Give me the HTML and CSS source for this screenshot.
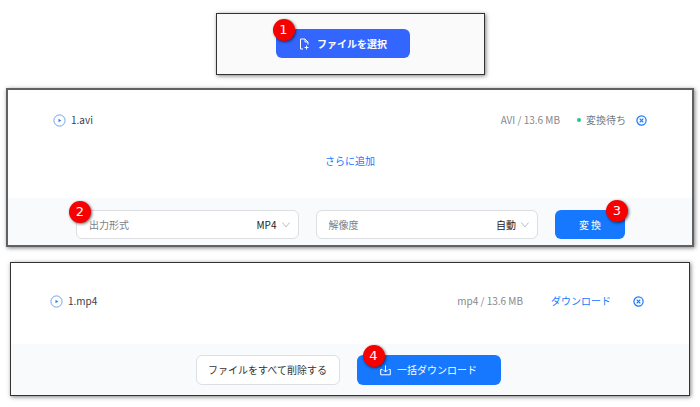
FILE: index.html
```
<!DOCTYPE html>
<html lang="ja">
<head>
  <meta charset="UTF-8">
  <meta name="viewport" content="width=device-width, initial-scale=1.0">
  <title>動画変換の手順</title>
  <link rel="stylesheet" href="styles.css">
</head>
<body>
  <main class="steps">
    <section class="panel panel-select">
      <div class="step-anchor">
        <button type="button" class="btn btn-select">
          <svg class="icon" width="12" height="12" viewBox="0 0 12 12" fill="none" stroke="currentColor">
            <path d="M5 11H2.500V1H7l3 3v2.500M7 1v3h3M8.500 7.500v4M6.500 9.500h4"/>
          </svg>
          ファイルを選択
        </button>
        <span class="badge badge-left">1</span>
      </div>
    </section>

    <section class="panel panel-convert">
      <div class="file-row">
        <svg class="play" width="13" height="13" viewBox="0 0 13 13">
          <circle cx="6.500" cy="6.500" r="5.600" fill="none" stroke="#69a4f6"/>
          <path d="M5.500 4.800v3.400l2.800-1.700z" fill="#2c7ef0"/>
        </svg>
        <span class="name">1.avi</span>
        <span class="size">AVI / 13.6 MB</span>
        <span class="status">変換待ち</span>
        <button type="button" class="remove" aria-label="削除">
          <svg width="11" height="11" viewBox="0 0 11 11" fill="none" stroke="currentColor" stroke-width="1.200">
            <circle cx="5.500" cy="5.500" r="4.600"/>
            <path d="M3.700 3.700l3.600 3.600M7.300 3.700L3.700 7.300"/>
          </svg>
        </button>
      </div>
      <a class="add-more" href="#">さらに追加</a>
      <div class="bar bar-options">
        <div class="field">
          <label for="format">出力形式</label>
          <select id="format">
            <option>MP4</option>
          </select>
          <svg class="chevron" width="8" height="6" viewBox="0 0 8 6" fill="none" stroke="#bbbec4">
            <path d="M.5 .5L4 5 7.500 .5"/>
          </svg>
          <span class="badge badge-field">2</span>
        </div>
        <div class="field">
          <label for="resolution">解像度</label>
          <select id="resolution">
            <option>自動</option>
          </select>
          <svg class="chevron" width="8" height="6" viewBox="0 0 8 6" fill="none" stroke="#bbbec4">
            <path d="M.5 .5L4 5 7.500 .5"/>
          </svg>
        </div>
        <div class="step-anchor">
          <button type="button" class="btn btn-convert">変 換</button>
          <span class="badge badge-right">3</span>
        </div>
      </div>
    </section>

    <section class="panel panel-download">
      <div class="file-row">
        <svg class="play" width="13" height="13" viewBox="0 0 13 13">
          <circle cx="6.500" cy="6.500" r="5.600" fill="none" stroke="#69a4f6"/>
          <path d="M5.500 4.800v3.400l2.800-1.700z" fill="#2c7ef0"/>
        </svg>
        <span class="name">1.mp4</span>
        <span class="size">mp4 / 13.6 MB</span>
        <a class="download" href="#">ダウンロード</a>
        <button type="button" class="remove" aria-label="削除">
          <svg width="11" height="11" viewBox="0 0 11 11" fill="none" stroke="currentColor" stroke-width="1.200">
            <circle cx="5.500" cy="5.500" r="4.600"/>
            <path d="M3.700 3.700l3.600 3.600M7.300 3.700L3.700 7.300"/>
          </svg>
        </button>
      </div>
      <div class="bar bar-actions">
        <button type="button" class="btn btn-plain">ファイルをすべて削除する</button>
        <div class="step-anchor">
          <button type="button" class="btn btn-all">
            <svg class="icon" width="11" height="11" viewBox="0 0 11 11" fill="none" stroke="currentColor">
              <path d="M5.500 .5v6.500M3.500 5l2 2 2-2M2.500 4.500H.7v5.300h9.600V4.500H8.500"/>
            </svg>
            一括ダウンロード
          </button>
          <span class="badge badge-inset">4</span>
        </div>
      </div>
    </section>
  </main>
</body>
</html>
```

FILE: styles.css
```
* {
  box-sizing: border-box;
}
body {
  margin: 0;
  background: #fff;
  font-family: "Noto Sans CJK JP", "Noto Sans", sans-serif;
  font-size: 10px;
  line-height: 16px;
  color: #333;
}
a {
  color: #1677ff;
  text-decoration: none;
}
button, select {
  font: inherit;
}
svg {
  display: block;
  flex: none;
}
.steps {
  padding: 13px 6px 10px;
}

/* Panels */
.panel {
  border: 1px solid #333;
  background: #fff;
  box-shadow: 1px 1px 4px rgba(0, 0, 0, 0.5);
}
.panel-select {
  width: 269px;
  margin: 0 auto;
  padding: 15px 74px 16px 59px;
  background: #fafafa;
}
.panel-convert {
  margin-top: 13px;
  border: 2px solid #5f6265;
  padding-top: 22px;
}
.panel-download {
  margin: 15px 4px 0;
  padding-top: 30px;
}

/* File rows */
.file-row {
  display: flex;
  align-items: center;
  padding: 0 45px;
}
.panel-download .file-row {
  padding: 0 45px 0 39px;
}
.name {
  margin-left: 5px;
  color: #39404d;
}
.size {
  margin-left: auto;
  color: #85888e;
}
.status {
  display: flex;
  align-items: center;
  gap: 5px;
  margin-left: 17px;
  color: #777b82;
}
.status::before {
  content: "";
  width: 4px;
  height: 4px;
  border-radius: 50%;
  background: #1cc98a;
}
.download {
  margin-left: 28px;
}
.remove {
  margin-left: 10px;
  padding: 0;
  border: 0;
  background: none;
  color: #1677ff;
  cursor: pointer;
}
.download + .remove {
  margin-left: 22px;
}
.add-more {
  display: block;
  width: fit-content;
  margin: 25px auto 29px;
}

/* Bottom bars */
.bar {
  display: flex;
  gap: 17px;
  background: #f9fafc;
}
.bar-options {
  padding: 12px 67px 6px 68px;
}
.bar-actions {
  justify-content: center;
  margin-top: 35px;
  padding: 11px 4px 10px 0;
}
.field {
  position: relative;
  display: flex;
  align-items: center;
  flex: 1;
  min-width: 0;
  padding: 0 8px 0 12px;
  border: 1px solid #dcdee1;
  border-radius: 6px;
  background: #fff;
}
.field label {
  color: #7b7f86;
}
.field select {
  flex: 1;
  min-width: 0;
  margin-right: 5px;
  padding: 0;
  border: 0;
  background: none;
  color: #222;
  appearance: none;
  text-align-last: right;
}

/* Buttons */
.btn {
  display: flex;
  align-items: center;
  justify-content: center;
  height: 29px;
  padding: 0;
  border: 0;
  border-radius: 6px;
  background: #1677ff;
  color: #fff;
  cursor: pointer;
}
.btn-select {
  width: 100%;
  gap: 7px;
  background: #3366ff;
  font-weight: bold;
}
.btn-convert {
  width: 70px;
}
.btn-plain {
  width: 144px;
  height: 30px;
  border: 1px solid #dcdee1;
  background: #fff;
  color: #333;
}
.btn-all {
  width: 144px;
  height: 30px;
  gap: 6px;
}

/* Step numbers */
.step-anchor {
  position: relative;
}
.badge {
  position: absolute;
  top: -10px;
  width: 22px;
  height: 22px;
  border-radius: 50%;
  background: #f60000;
  box-shadow: 1px 1px 3px rgba(0, 0, 0, 0.6);
  color: #fff;
  font: 13px/22px "DejaVu Sans", sans-serif;
  text-align: center;
}
.badge-left {
  left: -3px;
}
.badge-field {
  left: -8px;
}
.badge-right {
  right: -3px;
}
.badge-inset {
  left: 6px;
}
```
